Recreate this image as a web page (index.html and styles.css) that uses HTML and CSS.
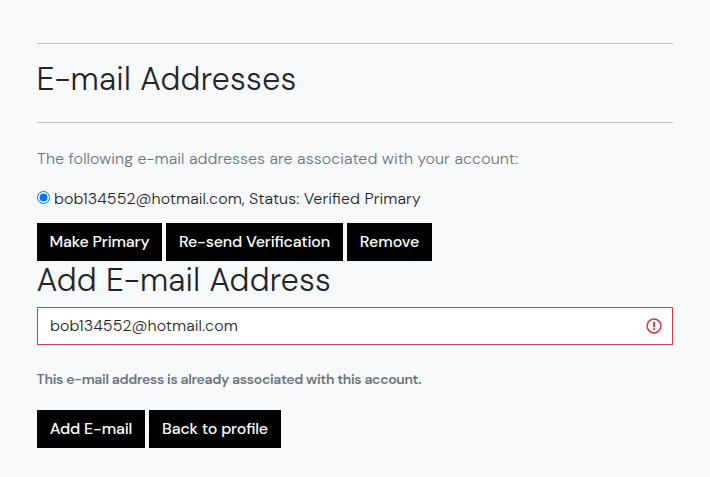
FILE: index.html
```html
<!DOCTYPE html>
<html lang="en">
<head>
<meta charset="utf-8">
<title>E-mail Addresses</title>
<link rel="stylesheet" href="styles.css">
</head>
<body>
<main class="account">
  <header class="page-head"><h1 class="title title-main">E-mail Addresses</h1></header>
  <p class="intro">The following e-mail addresses are associated with your account:</p>
  <form>
    <label class="address"><input class="radio" type="radio" name="email" checked><span class="address-text">bob134552@hotmail.com, Status: Verified Primary</span></label>
    <div class="actions">
      <button class="btn btn-primary" type="button">Make Primary</button>
      <button class="btn btn-resend" type="button">Re-send Verification</button>
      <button class="btn btn-remove" type="button">Remove</button>
    </div>
  </form>
  <h2 class="title title-add">Add E-mail Address</h2>
  <form>
    <div class="field">
      <input class="field-input" type="text" value="bob134552@hotmail.com" aria-label="E-mail">
      <svg class="field-icon" viewBox="0 0 16 16" fill="none" stroke="#dc3545" stroke-width="1.5"><circle cx="8" cy="8" r="6.9"/><path d="M8 3.8v5.5" stroke-width="1.9"/><path d="M8 10.3v1.8" stroke-width="1.9"/></svg>
    </div>
    <p class="error">This e-mail address is already associated with this account.</p>
    <div class="actions">
      <button class="btn btn-add" type="button">Add E-mail</button>
      <button class="btn btn-back" type="button">Back to profile</button>
    </div>
  </form>
</main>
</body>
</html>
```
FILE: styles.css
```css
* { box-sizing: border-box; }
body {
  margin: 0;
  background: #f8f9fb;
  color: #212529;
  font: 360 16px/24px "DM Sans", Inter, sans-serif;
  font-optical-sizing: none;
  font-feature-settings: "liga" 1;
  letter-spacing: 0.077px;
}
.account { padding: 43px 37px 0; }
.page-head {
  height: 80px;
  padding-top: 16px;
  border-top: 1px solid #bfc1c4;
  border-bottom: 1px solid #bfc1c4;
}
.title {
  margin: 0 0 0 -0.6px;
  font-size: 32px;
  line-height: 38px;
  font-weight: 300;
  letter-spacing: 0.28px;
  white-space: nowrap;
}
.title-add { height: 46px; letter-spacing: 0.24px; }
.intro { margin: 24px 0 16px; color: #6c757d; white-space: nowrap; }
.address { display: flex; align-items: center; gap: 4px; height: 24px; white-space: nowrap; }
.radio { width: 13px; height: 13px; margin: 0 0 3px; accent-color: #0075ff; }
.actions { display: flex; gap: 4px; }
.address + .actions { margin-top: 12px; }
.btn {
  height: 38px;
  padding: 0;
  border: 0;
  background: #000;
  color: #fff;
  font: inherit;
  font-weight: 500;
  letter-spacing: -0.18px;
  white-space: nowrap;
}
.btn-primary { width: 125px; }
.btn-resend { width: 177px; }
.btn-remove { width: 85px; letter-spacing: -0.04px; }
.btn-add { width: 108px; }
.btn-back { width: 132px; }
.field {
  display: flex;
  align-items: center;
  height: 38px;
  padding: 0 10px 0 12px;
  border: 1px solid #dc3545;
  background: #fff;
}
.field-input {
  flex: 1;
  min-width: 0;
  padding: 0;
  border: 0;
  outline: 0;
  background: none;
  color: #212529;
  font: inherit;
  letter-spacing: inherit;
}
.field-icon { width: 16px; height: 16px; }
.error {
  margin: 22px 0 19px -0.4px;
  color: #6c757d;
  font-size: 14px;
  font-weight: 600;
  letter-spacing: -0.32px;
  white-space: nowrap;
}
```
